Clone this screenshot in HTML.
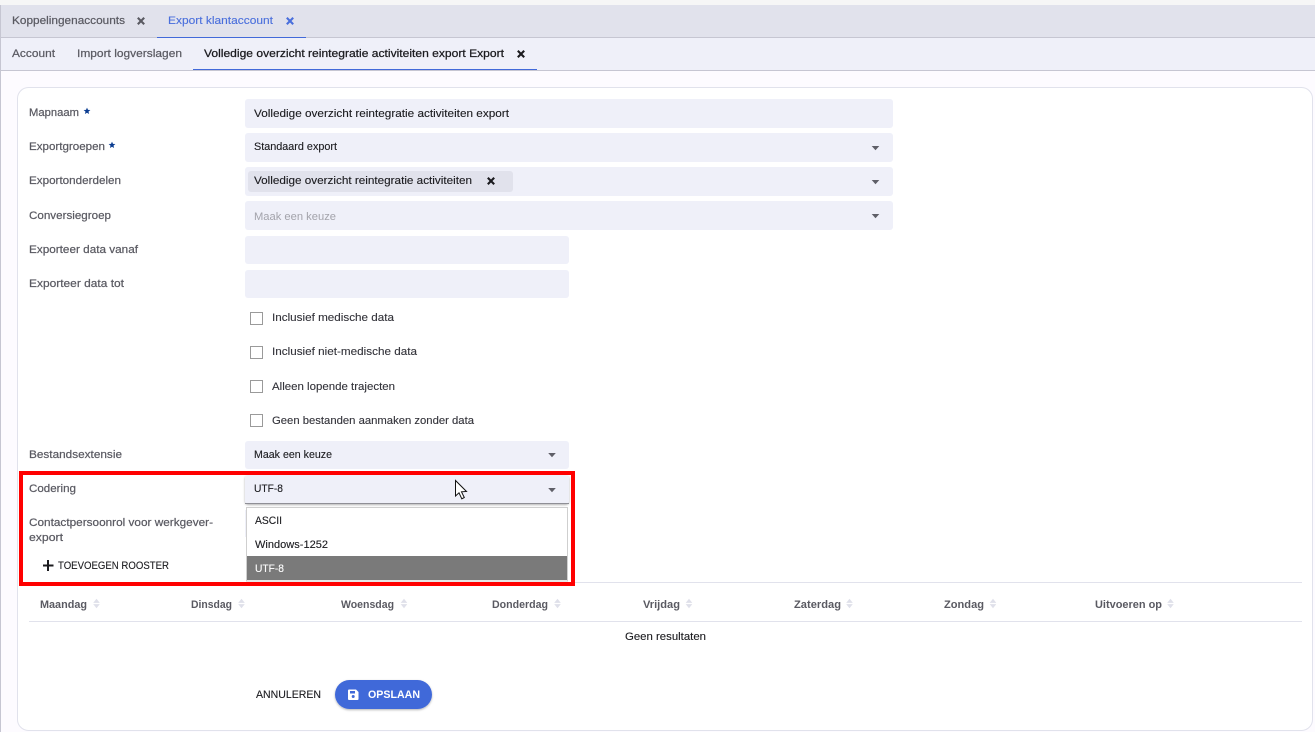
<!DOCTYPE html>
<html lang="nl">
<head>
<meta charset="utf-8">
<title>Export klantaccount</title>
<style>
html,body{margin:0;padding:0;width:1315px;height:732px;overflow:hidden;background:#fdfbff}
svg{display:block;position:absolute;left:0;top:0}
text{font-family:"Liberation Sans",sans-serif;font-size:11px;fill:#1b1b1f;stroke:#1b1b1f;stroke-width:.12}
.l{fill:#5a5a62;stroke:#5a5a62;stroke-width:.22}
.h{fill:#5a5a62;stroke:none;font-weight:bold}
</style>
</head>
<body>
<svg width="1315" height="732" viewBox="0 0 1315 732" xmlns="http://www.w3.org/2000/svg">
<defs>
<filter id="sh" x="-10%" y="-30%" width="120%" height="170%"><feDropShadow dx="0" dy="1" stdDeviation="1" flood-color="#000" flood-opacity=".3"/></filter>
<path id="x" d="M-3.200-3.200L3.200 3.200M3.200-3.200L-3.200 3.200" stroke-width="2.100" fill="none"/>
<path id="c" d="M-3.800-2H3.800L0 2.200Z" fill="#5f5f68"/>
<path id="s" d="M0-4.800L3.300-.6H-3.300ZM0 4.800L3.300 .6H-3.300Z" fill="#dfe0ea"/>
<path id="st" d="M0-3.400L1 -1.100L3.400 -1L1.500 .6L2.100 3L0 1.700L-2.100 3L-1.500 .6L-3.400 -1L-1 -1.100Z" fill="#0b3d91"/>
</defs>

<rect width="1315" height="732" fill="#fdfbff"/>
<rect width="1315" height="5" fill="#f6f6f6"/>
<rect y="5" width="1315" height="32" fill="#e1e2ec"/>
<rect y="37" width="1315" height="1" fill="#c6c6d2"/>
<rect y="38" width="1315" height="32" fill="#eff0f9"/>
<rect y="70" width="1315" height="1" fill="#c6c6d2"/>
<rect y="5" width="1" height="727" fill="#c6c6d2"/>

<text class="l" x="12" y="24" textLength="113" lengthAdjust="spacingAndGlyphs">Koppelingenaccounts</text>
<use href="#x" x="141" y="21" stroke="#5a5a62"/>
<text x="168" y="24" textLength="105" lengthAdjust="spacingAndGlyphs" style="fill:#4a6fdc;stroke:#4a6fdc">Export klantaccount</text>
<use href="#x" x="290" y="21" stroke="#4a6fdc"/>
<rect x="157" y="37" width="149" height="1" fill="#4169d9"/>

<text class="l" x="12" y="57" textLength="43" lengthAdjust="spacingAndGlyphs">Account</text>
<text class="l" x="77" y="57" textLength="105" lengthAdjust="spacingAndGlyphs">Import logverslagen</text>
<text x="204" y="57" textLength="300" lengthAdjust="spacingAndGlyphs" style="stroke-width:.25">Volledige overzicht reintegratie activiteiten export Export</text>
<use href="#x" x="521" y="54" stroke="#1b1b1f"/>
<rect x="193" y="69" width="344" height="1" fill="#4169d9"/>

<rect x="17.500" y="87.500" width="1295" height="643" rx="11" fill="#fff" stroke="#e1e2ec"/>

<text class="l" x="29" y="116" textLength="50" lengthAdjust="spacingAndGlyphs">Mapnaam</text>
<use href="#st" x="87" y="111"/>
<text class="l" x="29" y="150" textLength="76" lengthAdjust="spacingAndGlyphs">Exportgroepen</text>
<use href="#st" x="112" y="145"/>
<text class="l" x="29" y="184" textLength="92" lengthAdjust="spacingAndGlyphs">Exportonderdelen</text>
<text class="l" x="29" y="219" textLength="82" lengthAdjust="spacingAndGlyphs">Conversiegroep</text>
<text class="l" x="29" y="253" textLength="109" lengthAdjust="spacingAndGlyphs">Exporteer data vanaf</text>
<text class="l" x="29" y="287" textLength="95" lengthAdjust="spacingAndGlyphs">Exporteer data tot</text>
<text class="l" x="29" y="458" textLength="93" lengthAdjust="spacingAndGlyphs">Bestandsextensie</text>
<text class="l" x="29" y="492" textLength="47" lengthAdjust="spacingAndGlyphs">Codering</text>
<text class="l" x="29" y="526" textLength="184" lengthAdjust="spacingAndGlyphs">Contactpersoonrol voor werkgever-</text>
<text class="l" x="29" y="541" textLength="34" lengthAdjust="spacingAndGlyphs">export</text>

<rect x="245" y="99" width="648" height="29" rx="3" fill="#eff0f9"/>
<rect x="245" y="133" width="648" height="29" rx="3" fill="#eff0f9"/>
<rect x="245" y="167" width="648" height="29" rx="3" fill="#eff0f9"/>
<rect x="245" y="201" width="648" height="29" rx="3" fill="#eff0f9"/>
<rect x="245" y="236" width="324" height="28" rx="3" fill="#eff0f9"/>
<rect x="245" y="270" width="324" height="28" rx="3" fill="#eff0f9"/>
<rect x="245" y="441" width="324" height="28" rx="3" fill="#eff0f9"/>
<rect x="245" y="510" width="3" height="27" fill="#eff0f9"/>

<text x="254" y="117" textLength="255" lengthAdjust="spacingAndGlyphs">Volledige overzicht reintegratie activiteiten export</text>
<text x="254" y="150" textLength="83" lengthAdjust="spacingAndGlyphs">Standaard export</text>
<rect x="248" y="171" width="265" height="21" rx="3" fill="#e1e2ec"/>
<text x="254" y="184" textLength="218" lengthAdjust="spacingAndGlyphs">Volledige overzicht reintegratie activiteiten</text>
<use href="#x" x="491" y="181" stroke="#1b1b1f"/>
<text x="254" y="220" textLength="82" lengthAdjust="spacingAndGlyphs" style="fill:#a3a3ab;stroke:none">Maak een keuze</text>
<text x="254" y="458" textLength="78" lengthAdjust="spacingAndGlyphs">Maak een keuze</text>

<use href="#c" x="875.500" y="148"/>
<use href="#c" x="875.500" y="182"/>
<use href="#c" x="875.500" y="216"/>
<use href="#c" x="552" y="455"/>

<rect x="250.500" y="312.500" width="12" height="12" fill="#fff" stroke="#9a9a9a"/>
<rect x="250.500" y="346.500" width="12" height="12" fill="#fff" stroke="#9a9a9a"/>
<rect x="250.500" y="380.500" width="12" height="12" fill="#fff" stroke="#9a9a9a"/>
<rect x="250.500" y="414.500" width="12" height="12" fill="#fff" stroke="#9a9a9a"/>
<text x="272" y="321" textLength="122" lengthAdjust="spacingAndGlyphs" style="fill:#33333a;stroke:#33333a">Inclusief medische data</text>
<text x="272" y="355" textLength="145" lengthAdjust="spacingAndGlyphs" style="fill:#33333a;stroke:#33333a">Inclusief niet-medische data</text>
<text x="272" y="390" textLength="123" lengthAdjust="spacingAndGlyphs" style="fill:#33333a;stroke:#33333a">Alleen lopende trajecten</text>
<text x="272" y="424" textLength="202" lengthAdjust="spacingAndGlyphs" style="fill:#33333a;stroke:#33333a">Geen bestanden aanmaken zonder data</text>

<rect x="245" y="475" width="324" height="29" rx="3" fill="#eff0f9" filter="url(#sh)"/>
<rect x="245" y="503" width="324" height="1" fill="#8f8f96"/>
<text x="254" y="492" textLength="29" lengthAdjust="spacingAndGlyphs">UTF-8</text>
<use href="#c" x="552" y="490"/>

<rect x="246.500" y="507.500" width="321" height="73.500" fill="#fff" stroke="#cfcfcf"/>
<text x="255" y="524" textLength="27" lengthAdjust="spacingAndGlyphs">ASCII</text>
<text x="255" y="548" textLength="73" lengthAdjust="spacingAndGlyphs">Windows-1252</text>
<rect x="247" y="556" width="320" height="24" fill="#7a7a7a"/>
<text x="255" y="572" textLength="29" lengthAdjust="spacingAndGlyphs" style="fill:#fff;stroke:#fff">UTF-8</text>

<path d="M48 560V571M43 565.500H53.500" stroke="#1b1b1f" stroke-width="2" fill="none"/>
<text x="58" y="569" textLength="111" lengthAdjust="spacingAndGlyphs">TOEVOEGEN ROOSTER</text>

<rect x="575" y="582" width="727" height="1" fill="#e1e2ec"/>
<rect x="29" y="621" width="1273" height="1" fill="#e1e2ec"/>

<rect x="21" y="473" width="552" height="111" fill="none" stroke="#ff0000" stroke-width="4"/>

<path d="M455.500 480.500V496L459 492.800L461.800 498.800L464.300 497.500L461.500 491.800L466.500 491.500Z" fill="#fff" stroke="#111" stroke-width="1"/>

<text class="h" x="40" y="608" textLength="47" lengthAdjust="spacingAndGlyphs">Maandag</text><use href="#s" x="96.500" y="603.500"/>
<text class="h" x="191" y="608" textLength="41" lengthAdjust="spacingAndGlyphs">Dinsdag</text><use href="#s" x="241.500" y="603.500"/>
<text class="h" x="341" y="608" textLength="53" lengthAdjust="spacingAndGlyphs">Woensdag</text><use href="#s" x="404" y="603.500"/>
<text class="h" x="492" y="608" textLength="56" lengthAdjust="spacingAndGlyphs">Donderdag</text><use href="#s" x="557.500" y="603.500"/>
<text class="h" x="643" y="608" textLength="37" lengthAdjust="spacingAndGlyphs">Vrijdag</text><use href="#s" x="689" y="603.500"/>
<text class="h" x="794" y="608" textLength="47" lengthAdjust="spacingAndGlyphs">Zaterdag</text><use href="#s" x="849.500" y="603.500"/>
<text class="h" x="944" y="608" textLength="40" lengthAdjust="spacingAndGlyphs">Zondag</text><use href="#s" x="993" y="603.500"/>
<text class="h" x="1095" y="608" textLength="67" lengthAdjust="spacingAndGlyphs">Uitvoeren op</text><use href="#s" x="1170.500" y="603.500"/>

<text x="625" y="640" textLength="81" lengthAdjust="spacingAndGlyphs">Geen resultaten</text>

<text x="256" y="698" textLength="65" lengthAdjust="spacingAndGlyphs">ANNULEREN</text>
<rect x="335" y="680" width="97" height="29" rx="14.500" fill="#4169d9" filter="url(#sh)"/>
<path d="M348 690.500a1 1 0 0 1 1-1H356L358.500 692V699a1 1 0 0 1-1 1H349a1 1 0 0 1-1-1Z" fill="#fff"/>
<rect x="350" y="691" width="5" height="2.500" fill="#4169d9"/>
<circle cx="353.200" cy="696.500" r="1.500" fill="#4169d9"/>
<text x="368" y="698" textLength="52" lengthAdjust="spacingAndGlyphs" style="fill:#fff;stroke:none;font-weight:bold">OPSLAAN</text>
</svg>
</body>
</html>
